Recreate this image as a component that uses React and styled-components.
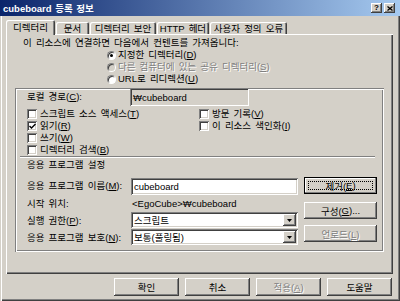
import React from 'react';
import styled, { createGlobalStyle, css } from 'styled-components';

const face = '#d4d0c8';
const shadow = '#808080';
const dark = '#404040';

const GlobalStyle = createGlobalStyle`
  html, body {
    margin: 0;
    padding: 0;
    background: ${face};
  }
  body {
    font-family: "Liberation Sans", "Noto Sans CJK KR", sans-serif;
    font-size: 9.5px;
    color: #000;
  }
  * { box-sizing: border-box; }
`;

const raised = css`
  box-shadow: inset -1px -1px ${dark}, inset 1px 1px #fff, inset -2px -2px ${shadow}, inset 2px 2px ${face};
`;

const sunken = css`
  box-shadow: inset 1px 1px ${shadow}, inset -1px -1px #fff, inset 2px 2px ${dark}, inset -2px -2px ${face};
`;

const Window = styled.div`
  width: 400px;
  height: 301px;
  background: ${face};
  display: flex;
  flex-direction: column;
  overflow: hidden;
  box-shadow: inset 1px 0 ${face}, inset 2px 0 #fff, inset -1px -1px ${dark}, inset -2px -2px ${shadow};
`;

const TitleBar = styled.div`
  height: 16px;
  display: flex;
  align-items: center;
  padding: 0 5px 0 3px;
  background: linear-gradient(to right, #0a246a, #a6caf0);
  color: #fff;
  font-weight: bold;
  font-size: 9.5px;
`;

const Title = styled.div`
  flex: 1;
  white-space: nowrap;
  word-spacing: 1px;
`;

const CaptionButtons = styled.div`
  display: flex;
  gap: 2px;
`;

const CaptionButton = styled.div`
  width: 11px;
  height: 10px;
  background: ${face};
  ${raised};
  display: flex;
  align-items: center;
  justify-content: center;
  color: #000;
  font-family: "Liberation Sans", sans-serif;
  font-weight: bold;
  font-size: 8px;
  line-height: 8px;
`;

const TabStrip = styled.div`
  margin-top: 4px;
  height: 14px;
  padding-left: 6px;
  display: flex;
  align-items: flex-end;
  gap: 1px;
  position: relative;
  z-index: 1;
`;

const Tab = styled.div`
  width: ${({ $width }) => $width}px;
  height: ${({ $selected }) => ($selected ? 15 : 12)}px;
  margin-bottom: ${({ $selected }) => ($selected ? -1 : 0)}px;
  background: ${face};
  border-radius: 2px 2px 0 0;
  box-shadow: inset 1px 1px #fff, inset -1px 0 ${dark}, inset -2px 0 ${shadow};
  display: flex;
  align-items: center;
  justify-content: center;
  white-space: nowrap;
  line-height: 12px;
  word-spacing: 1.5px;
  padding-top: ${({ $selected }) => ($selected ? 0 : 1)}px;
`;

const Panel = styled.div`
  margin: 0 7px 0 6px;
  height: 240px;
  display: flex;
  flex-direction: column;
  box-shadow: inset 1px 1px #fff, inset -1px -1px ${dark}, inset -2px -2px ${shadow};
`;

const Line = styled.div`
  height: 12px;
  line-height: 12px;
  white-space: nowrap;
  word-spacing: 1.5px;
`;

const Intro = styled(Line)`
  margin-top: 3px;
  padding-left: 17px;
`;

const RadioList = styled.div`
  padding-left: 101px;
  display: flex;
  flex-direction: column;
`;

const RadioRow = styled.div`
  display: flex;
  align-items: center;
  gap: 2px;
  height: 12px;
  line-height: 12px;
  white-space: nowrap;
  word-spacing: 1.5px;
`;

const RadioDot = styled.span`
  width: 9px;
  height: 9px;
  border-radius: 50%;
  border: 1px solid;
  border-color: ${shadow} #fff #fff ${shadow};
  background: ${({ $disabled }) => ($disabled ? face : '#fff')};
  box-shadow: inset 1px 1px ${dark};
  display: flex;
  align-items: center;
  justify-content: center;
  &::after {
    content: '';
    width: 3px;
    height: 3px;
    border-radius: 50%;
    background: #000;
    display: ${({ $checked }) => ($checked ? 'block' : 'none')};
  }
`;

const Text = styled.span`
  white-space: nowrap;
  ${({ $disabled }) =>
    $disabled &&
    css`
      color: ${shadow};
      text-shadow: 1px 1px #fff;
    `}
`;

const GroupBox = styled.div`
  margin: 3px 9px 0 9px;
  height: 164px;
  padding: 0 7px 0 12px;
  display: flex;
  flex-direction: column;
  box-shadow: inset 1px 1px ${shadow}, inset -1px -1px #fff, inset 2px 2px #fff, inset -2px -2px ${shadow};
`;

const PathRow = styled.div`
  display: flex;
  align-items: center;
  height: 18px;
`;

const FieldLabel = styled.div`
  width: ${({ $width }) => $width}px;
  white-space: nowrap;
  word-spacing: 1.5px;
  line-height: 12px;
`;

const ReadOnlyBox = styled.div`
  width: 119px;
  height: 18px;
  padding-left: 3px;
  display: flex;
  align-items: center;
  background: ${face};
  ${sunken};
`;

const CheckGrid = styled.div`
  margin-top: 2px;
  display: grid;
  grid-template-columns: 172px 1fr;
  grid-template-rows: repeat(4, 12px);
  grid-auto-flow: column;
`;

const CheckRow = styled.div`
  display: flex;
  align-items: center;
  gap: 3px;
  line-height: 12px;
  white-space: nowrap;
  word-spacing: 1.5px;
`;

const Box = styled.span`
  width: 10px;
  height: 10px;
  background: #fff;
  ${sunken};
  display: flex;
  align-items: center;
  justify-content: center;
`;

const Separator = styled.div`
  height: 2px;
  margin: 0 2px 0 -7px;
  border-top: 1px solid ${shadow};
  border-bottom: 1px solid #fff;
`;

const SectionLabel = styled(Line)`
  margin-top: 1px;
`;

const AppArea = styled.div`
  margin-top: 6px;
  display: flex;
`;

const FormGrid = styled.div`
  display: grid;
  grid-template-columns: 104px 167px;
  grid-template-rows: 18px 17px 17px 17px;
  align-items: center;
`;

const TextInput = styled.div`
  height: 17px;
  align-self: end;
  padding-left: 3px;
  display: flex;
  align-items: center;
  background: #fff;
  ${sunken};
`;

const Select = styled.div`
  height: 16px;
  align-self: start;
  padding: 2px 2px 2px 3px;
  display: flex;
  align-items: center;
  background: #fff;
  ${sunken};
`;

const SelectValue = styled.span`
  flex: 1;
  white-space: nowrap;
`;

const ArrowButton = styled.span`
  width: 13px;
  height: 12px;
  background: ${face};
  ${raised};
  display: flex;
  align-items: center;
  justify-content: center;
`;

const ButtonCol = styled.div`
  margin-left: 6px;
  width: 73px;
  display: flex;
  flex-direction: column;
`;

const Button = styled.div`
  position: relative;
  width: ${({ $width }) => $width || 73}px;
  height: ${({ $height }) => $height || 17}px;
  margin-top: ${({ $top }) => $top || 0}px;
  background: ${face};
  display: flex;
  align-items: center;
  justify-content: center;
  white-space: nowrap;
  ${raised};
  ${({ $focused }) =>
    $focused &&
    css`
      box-shadow: inset 0 0 0 1px #000, inset -2px -2px ${shadow}, inset 2px 2px #fff;
      &::after {
        content: '';
        position: absolute;
        inset: 4px;
        border: 1px dotted #000;
      }
    `}
`;

const Footer = styled.div`
  margin-top: 4px;
  padding-right: 8px;
  display: flex;
  justify-content: flex-end;
  gap: 6px;
`;

const Check = () => (
  <svg width="7" height="7" viewBox="0 0 7 7">
    <path d="M0.5 3 L2.5 5 L6.5 1" fill="none" stroke="#000" strokeWidth="1.4" />
  </svg>
);

const Arrow = () => (
  <svg width="5" height="3" viewBox="0 0 5 3">
    <path d="M0 0 H5 L2.5 3 Z" fill="#000" />
  </svg>
);

const CloseGlyph = () => (
  <svg width="6" height="5" viewBox="0 0 6 5">
    <path d="M0.5 0.5 L5.5 4.5 M5.5 0.5 L0.5 4.5" stroke="#000" strokeWidth="1.3" />
  </svg>
);

const tabs = [
  { label: '디렉터리', width: 49, selected: true },
  { label: '문서', width: 33 },
  { label: '디렉터리 보안', width: 66 },
  { label: 'HTTP 헤더', width: 52 },
  { label: '사용자 정의 오류', width: 77 },
];

const checks = [
  { label: <>스크립트 소스 액세스(<u>T</u>)</> },
  { label: <>읽기(<u>R</u>)</>, checked: true },
  { label: <>쓰기(<u>W</u>)</> },
  { label: <>디렉터리 검색(<u>B</u>)</> },
  { label: <>방문 기록(<u>V</u>)</> },
  { label: <>이 리소스 색인화(<u>I</u>)</> },
];

const Radio = ({ checked, disabled, children }) => (
  <RadioRow>
    <RadioDot $checked={checked} $disabled={disabled} />
    <Text $disabled={disabled}>{children}</Text>
  </RadioRow>
);

const Dropdown = ({ value }) => (
  <Select>
    <SelectValue>{value}</SelectValue>
    <ArrowButton>
      <Arrow />
    </ArrowButton>
  </Select>
);

const App = () => (
  <Window>
    <GlobalStyle />
    <TitleBar>
      <Title>cubeboard 등록 정보</Title>
      <CaptionButtons>
        <CaptionButton>?</CaptionButton>
        <CaptionButton>
          <CloseGlyph />
        </CaptionButton>
      </CaptionButtons>
    </TitleBar>

    <TabStrip>
      {tabs.map((t) => (
        <Tab key={t.label} $width={t.width} $selected={t.selected}>
          {t.label}
        </Tab>
      ))}
    </TabStrip>

    <Panel>
      <Intro>이 리소스에 연결하면 다음에서 컨텐트를 가져옵니다:</Intro>
      <RadioList>
        <Radio checked>
          지정한 디렉터리(<u>D</u>)
        </Radio>
        <Radio disabled>
          다른 컴퓨터에 있는 공유 디렉터리(<u>S</u>)
        </Radio>
        <Radio>
          URL로 리디렉션(<u>U</u>)
        </Radio>
      </RadioList>

      <GroupBox>
        <PathRow>
          <FieldLabel $width={103}>
            로컬 경로(<u>C</u>):
          </FieldLabel>
          <ReadOnlyBox>₩cubeboard</ReadOnlyBox>
        </PathRow>

        <CheckGrid>
          {checks.map((c, i) => (
            <CheckRow key={i}>
              <Box>{c.checked && <Check />}</Box>
              <span>{c.label}</span>
            </CheckRow>
          ))}
        </CheckGrid>

        <Separator />
        <SectionLabel>응용 프로그램 설정</SectionLabel>

        <AppArea>
          <FormGrid>
            <FieldLabel>
              응용 프로그램 이름(<u>M</u>):
            </FieldLabel>
            <TextInput>cubeboard</TextInput>
            <FieldLabel>시작 위치:</FieldLabel>
            <Text style={{ paddingLeft: 1 }}>&lt;EgoCube&gt;₩cubeboard</Text>
            <FieldLabel>
              실행 권한(<u>P</u>):
            </FieldLabel>
            <Dropdown value="스크립트" />
            <FieldLabel>
              응용 프로그램 보호(<u>N</u>):
            </FieldLabel>
            <Dropdown value="보통(풀링됨)" />
          </FormGrid>

          <ButtonCol>
            <Button $focused>
              제거(<u>E</u>)
            </Button>
            <Button $top={8}>
              구성(<u>G</u>)...
            </Button>
            <Button $top={6}>
              <Text $disabled>
                언로드(<u>L</u>)
              </Text>
            </Button>
          </ButtonCol>
        </AppArea>
      </GroupBox>
    </Panel>

    <Footer>
      <Button $width={65} $height={18}>확인</Button>
      <Button $width={65} $height={18}>취소</Button>
      <Button $width={65} $height={18}>
        <Text $disabled>
          적용(<u>A</u>)
        </Text>
      </Button>
      <Button $width={65} $height={18}>도움말</Button>
    </Footer>
  </Window>
);

export default App;
